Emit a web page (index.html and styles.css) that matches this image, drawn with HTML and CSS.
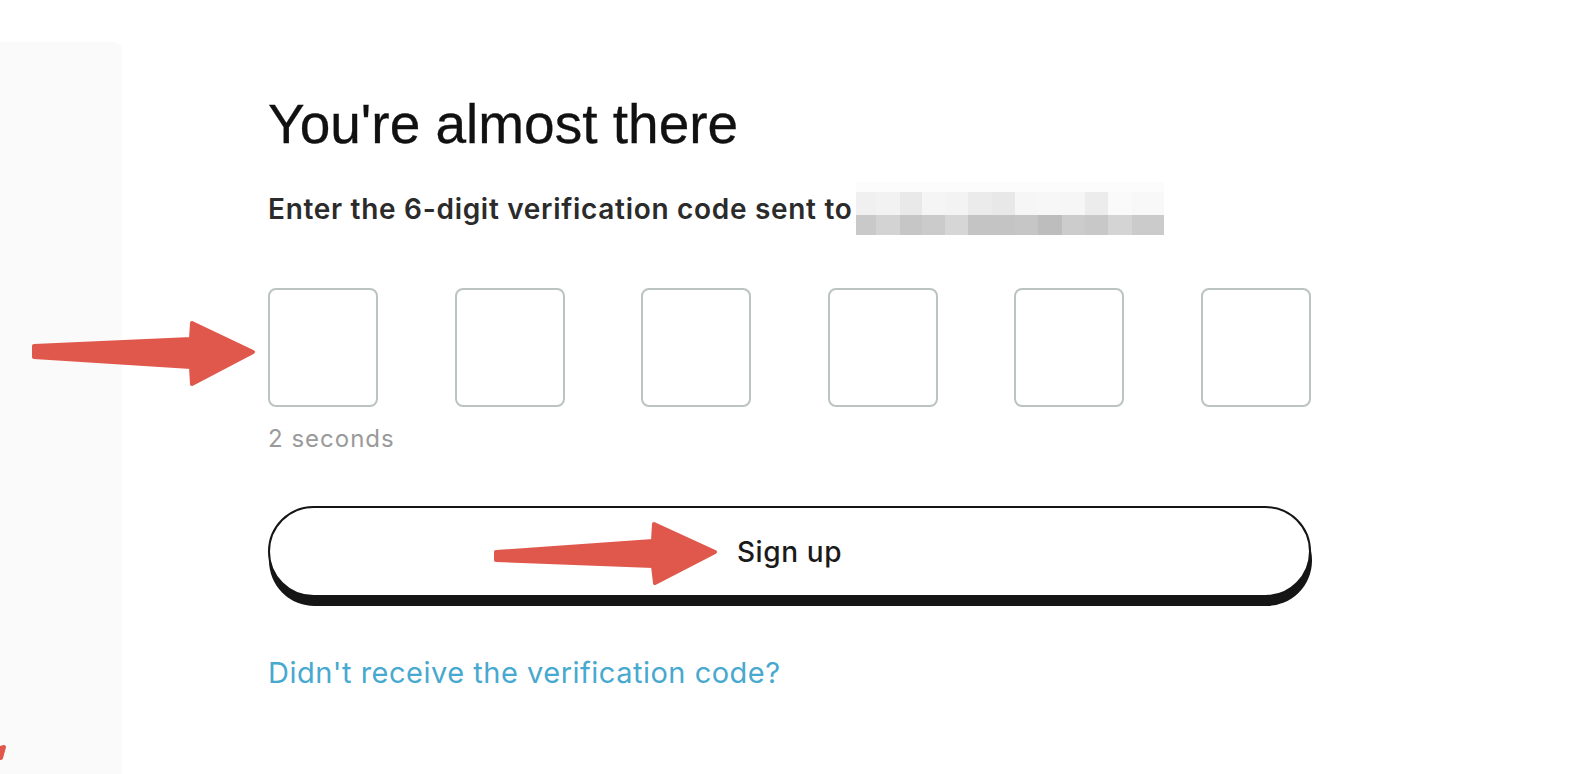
FILE: index.html
```html
<!DOCTYPE html>
<html lang="en">
<head>
    <meta charset="UTF-8">
    <meta name="viewport" content="width=device-width, initial-scale=1.0">
    <title>Verify your email</title>
    <link rel="stylesheet" href="styles.css">
</head>
<body>
    <aside class="sidebar"></aside>

    <main class="content">
        <h1 class="title">You're almost there</h1>
        <div class="sent-row">
            <p class="sent-text">Enter the 6-digit verification code sent to</p>
            <div class="email-blur">
                <div class="blur-top"></div>
                <div class="blur-bottom"></div>
            </div>
        </div>

        <div class="code-inputs">
            <input class="code-box" type="text" maxlength="1" aria-label="Digit 1">
            <input class="code-box" type="text" maxlength="1" aria-label="Digit 2">
            <input class="code-box" type="text" maxlength="1" aria-label="Digit 3">
            <input class="code-box" type="text" maxlength="1" aria-label="Digit 4">
            <input class="code-box" type="text" maxlength="1" aria-label="Digit 5">
            <input class="code-box" type="text" maxlength="1" aria-label="Digit 6">
        </div>
        <div class="timer">2 seconds</div>

        <button class="signup-btn">Sign up</button>

        <a class="resend-link" href="#">Didn't receive the verification code?</a>
    </main>

    <!-- annotation arrows drawn over the screenshot -->
    <svg class="annotations" width="1572" height="774" viewBox="0 0 1572 774">
        <g fill="#e0584c" stroke="#e0584c" stroke-width="4" stroke-linejoin="round">
            <polygon points="34,346 191,339 192,323 253,352 192,384 191,367 34,357"/>
            <polygon points="496,552 653,541 654,524 715,552 655,583 653,566 496,560"/>
            <polygon points="0,748 4,747 1,758 0,758"/>
        </g>
    </svg>
</body>
</html>
```

FILE: styles.css
```css
body {
    display: flex;
    margin: 0;
    height: 100vh;
    background: #ffffff;
    font-family: Inter, "Noto Sans", sans-serif;
    overflow: hidden;
}
.sidebar {
    width: 122px;
    margin-top: 42px;
    background-color: #fafafa;
    border-top-right-radius: 8px;
    flex-shrink: 0;
}
.content {
    display: flex;
    flex-direction: column;
    width: 1043px;
    padding-left: 146px;
    padding-top: 97px;
}
.title {
    margin: 0;
    font-family: "Liberation Sans", Arial, sans-serif;
    font-size: 55px;
    line-height: 54px;
    font-weight: normal;
    color: #111111;
    -webkit-text-stroke: 0.3px #111111;
}
.sent-row {
    display: flex;
    align-items: center;
    margin-top: 31px;
}
.sent-text {
    margin: 0;
    font-size: 28px;
    line-height: 28px;
    font-weight: 600;
    color: #2b2b2b;
    letter-spacing: 0.7px;
}
.email-blur {
    display: flex;
    flex-direction: column;
    width: 308px;
    height: 53px;
    margin-left: 3px;
}
.blur-top {
    height: 33px;
    background: linear-gradient(to bottom, #fcfcfc 0, #fcfcfc 10px, transparent 10px),
        linear-gradient(to right,
            #f0f0f0 0 20px, #f2f2f2 20px 44px, #e9e9e9 44px 66px, #f5f5f5 66px 89px,
            #f3f3f3 89px 112px, #ebebeb 112px 136px, #e8e8e8 136px 159px, #f6f6f6 159px 182px,
            #f7f7f7 182px 206px, #f6f6f6 206px 229px, #ececec 229px 252px, #fafafa 252px 276px,
            #f8f8f8 276px 308px);
}
.blur-bottom {
    height: 20px;
    background: linear-gradient(to right,
        #c9c9c9 0 20px, #d3d3d3 20px 44px, #c6c6c6 44px 66px, #cbcbcb 66px 89px,
        #d6d6d6 89px 112px, #c4c4c4 112px 136px, #c4c4c4 136px 159px, #c6c6c6 159px 182px,
        #bdbdbd 182px 206px, #cccccc 206px 229px, #c8c8c8 229px 252px, #d4d4d4 252px 276px,
        #cbcbcb 276px 308px);
}
.code-inputs {
    display: flex;
    justify-content: space-between;
    margin-top: 53px;
}
.code-box {
    box-sizing: border-box;
    width: 110px;
    height: 119px;
    border: 2px solid #bcc3c3;
    border-radius: 8px;
    background: #ffffff;
    font-size: 40px;
    text-align: center;
    outline: none;
}
.timer {
    margin-top: 20px;
    font-size: 24px;
    line-height: 23px;
    letter-spacing: 1px;
    color: #9a9a9a;
}
.signup-btn {
    box-sizing: border-box;
    height: 91px;
    margin-top: 56px;
    border: 2px solid #151515;
    border-radius: 46px;
    background: #ffffff;
    box-shadow: 1px 9px 0 #151515;
    font-family: Inter, "Noto Sans", sans-serif;
    font-size: 28px;
    font-weight: 500;
    letter-spacing: 0.6px;
    color: #1a1a1a;
    cursor: pointer;
}
.resend-link {
    align-self: flex-start;
    margin-top: 62px;
    font-size: 29px;
    line-height: 27px;
    letter-spacing: 0.5px;
    color: #47a9cf;
    text-decoration: none;
}
.annotations {
    position: absolute;
    top: 0;
    left: 0;
    pointer-events: none;
}
```
